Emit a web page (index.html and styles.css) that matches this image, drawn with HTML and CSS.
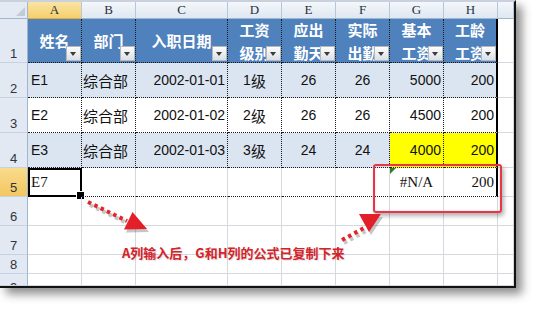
FILE: index.html
```html
<!DOCTYPE html>
<html lang="zh">
<head>
<meta charset="utf-8">
<title>Sheet</title>
<link rel="stylesheet" href="styles.css">
</head>
<body>
<div class="window">
  <div class="sheet">
    <div class="corner"><span class="tri"></span></div>
    <div class="ch sel">A</div><div class="ch">B</div><div class="ch">C</div><div class="ch">D</div><div class="ch">E</div><div class="ch">F</div><div class="ch">G</div><div class="ch">H</div><div class="ch"></div>

    <div class="rh">1</div>
    <div class="th">姓名<span class="flt"></span></div>
    <div class="th">部门<span class="flt"></span></div>
    <div class="th">入职日期<span class="flt"></span></div>
    <div class="th two">工资<br>级别<span class="flt"></span></div>
    <div class="th two">应出<br>勤天<span class="flt"></span></div>
    <div class="th two">实际<br>出勤<span class="flt"></span></div>
    <div class="th two">基本<br>工资<span class="flt"></span></div>
    <div class="th two hr">工龄<br>工资<span class="flt"></span></div>
    <div class="c"></div>

    <div class="rh">2</div>
    <div class="c t band">E1</div><div class="c t band cjk">综合部</div><div class="c t band num">2002-01-01</div><div class="c t band ctr">1<span class="cjk">级</span></div><div class="c t band ctr">26</div><div class="c t band ctr">26</div><div class="c t band num">5000</div><div class="c t band num hr">200</div><div class="c"></div>

    <div class="rh">3</div>
    <div class="c t">E2</div><div class="c t cjk">综合部</div><div class="c t num">2002-01-02</div><div class="c t ctr">2<span class="cjk">级</span></div><div class="c t ctr">26</div><div class="c t ctr">26</div><div class="c t num">4500</div><div class="c t num hr">200</div><div class="c"></div>

    <div class="rh">4</div>
    <div class="c t band">E3</div><div class="c t band cjk">综合部</div><div class="c t band num">2002-01-03</div><div class="c t band ctr">3<span class="cjk">级</span></div><div class="c t band ctr">24</div><div class="c t band ctr">24</div><div class="c t yel num">4000</div><div class="c t yel num hr">200</div><div class="c"></div>

    <div class="rh sel">5</div>
    <div class="c active ser">E7</div><div class="c db"></div><div class="c db"></div><div class="c db"></div><div class="c db"></div><div class="c db"></div><div class="c db ser ctr err">#N/A</div><div class="c db ser num hr">200</div><div class="c"></div>

    <div class="rh">6</div><div class="c"></div><div class="c"></div><div class="c"></div><div class="c"></div><div class="c"></div><div class="c"></div><div class="c"></div><div class="c"></div><div class="c"></div>
    <div class="rh">7</div><div class="c"></div><div class="c"></div><div class="c"></div><div class="c"></div><div class="c"></div><div class="c"></div><div class="c"></div><div class="c"></div><div class="c"></div>
    <div class="rh">8</div><div class="c"></div><div class="c"></div><div class="c"></div><div class="c"></div><div class="c"></div><div class="c"></div><div class="c"></div><div class="c"></div><div class="c"></div>
    <div class="rh clip">9</div><div class="c"></div><div class="c"></div><div class="c"></div><div class="c"></div><div class="c"></div><div class="c"></div><div class="c"></div><div class="c"></div><div class="c"></div>
  </div>

  <div class="redbox"></div>
  <svg class="arrows" width="537" height="309" viewBox="0 0 537 309">
    <g opacity="0.3" transform="translate(2,3)">
      <line x1="88" y1="202" x2="127" y2="221" stroke="#444" stroke-width="4" stroke-dasharray="3.5 3.5"/>
      <polygon points="147,229 132.5,212 124,229.5" fill="#444"/>
      <line x1="342" y1="240" x2="364" y2="228" stroke="#444" stroke-width="4" stroke-dasharray="3.5 3.5"/>
      <polygon points="381,214 359,214 369,232" fill="#444"/>
    </g>
    <line x1="88" y1="202" x2="127" y2="221" stroke="#e3242b" stroke-width="4" stroke-dasharray="3.5 3.5"/>
    <polygon points="147,229 132.5,212 124,229.5" fill="#e3202a"/>
    <line x1="342" y1="240" x2="364" y2="228" stroke="#e3242b" stroke-width="4" stroke-dasharray="3.5 3.5"/>
    <polygon points="381,214 359,214 369,232" fill="#e3202a"/>
  </svg>
  <div class="note">A列输入后，G和H列的公式已复制下来</div>
</div>
</body>
</html>
```

FILE: styles.css
```css
* { box-sizing: border-box; margin: 0; padding: 0; }
body { background: #fff; width: 537px; height: 309px; overflow: hidden; }

.window {
  position: relative;
  width: 516px;
  border-top: 2px solid #c9d1dc;
  border-right: 2px solid #111;
  border-bottom: 2px solid #111;
  background: #fff;
  box-shadow: 6px 6px 9px rgba(0, 0, 0, 0.45);
}

.sheet {
  display: grid;
  grid-template-columns: 28px 54px 54px 92px 54px 54px 54px 54px 54px 16px;
  grid-template-rows: 17px 44px 35px 35px 35px 29px 29px 29px 19px 12px;
  font-family: "Liberation Sans", Arial, sans-serif;
  font-size: 14px;
  color: #111;
}

.sheet > div {
  position: relative;
  display: flex;
  align-items: center;
  padding: 0 3px;
  white-space: nowrap;
  border-right: 1px solid #d5d8dd;
  border-bottom: 1px solid #d5d8dd;
}

.sheet > .corner { background: #e3eaf3; border-right-color: #9eb6ce; border-bottom-color: #9eb6ce; }
.tri {
  position: absolute; right: 2px; bottom: 2px;
  width: 0; height: 0;
  border-left: 9px solid transparent;
  border-bottom: 9px solid #c3ccd6;
}

.sheet > .ch {
  justify-content: center;
  background: linear-gradient(#f4f7fb, #dfe7f1);
  border-right-color: #b7c7da;
  border-bottom-color: #9eb6ce;
  font-family: "Liberation Serif", "DejaVu Serif", serif;
  font-size: 13px;
  color: #27303d;
}
.sheet > .ch.sel { background: linear-gradient(#fae4a4, #f5cf6b); border-bottom-color: #f0a73a; }

.sheet > .rh {
  justify-content: center;
  align-items: flex-end;
  padding-bottom: 1px;
  background: #e2e9f3;
  border-right-color: #9eb6ce;
  border-bottom-color: #c5d3e3;
  font-family: "Liberation Sans", Arial, sans-serif;
  font-size: 13px;
  line-height: 14px;
  color: #2e3440;
}
.sheet > .rh.sel { background: linear-gradient(#f9dc8c, #f3c660); }
.sheet > .rh.clip { align-items: flex-start; padding-top: 7px; overflow: hidden; }

.sheet > .th {
  justify-content: center;
  background: #4f81bd;
  color: #fff;
  font-family: "Noto Sans CJK SC", sans-serif;
  font-weight: bold;
  font-size: 15px;
  line-height: 23px;
  text-align: center;
  border-right: 1px dotted #1a1a1a;
  border-bottom: 1px dotted #1a1a1a;
}
.flt {
  position: absolute; right: 0; bottom: 1px;
  width: 15px; height: 15px;
  background: linear-gradient(#fdfdfd, #dcdfe3);
  border: 1px solid #b3b8bf;
}
.flt::after {
  content: ""; position: absolute; left: 3px; top: 5px;
  border-left: 3.5px solid transparent;
  border-right: 3.5px solid transparent;
  border-top: 4px solid #3a3a3a;
}

.sheet > .t { border-right: 1px dotted #1a1a1a; border-bottom: 1px dotted #1a1a1a; }
.sheet > .band { background: #dbe5f1; }
.sheet > .yel { background: #ffff00; }
.sheet > .num { justify-content: flex-end; padding-right: 2px; }
.sheet > .ctr { justify-content: center; }
.cjk { font-family: "Noto Sans CJK SC", sans-serif; font-size: 15px; }
.sheet > .cjk { padding-left: 1px; }
.ser { font-family: "Liberation Serif", "DejaVu Serif", serif; font-size: 15px; }
.sheet > .hr { border-right: 2px solid #000; }
.sheet > .db { border-bottom: 1px dotted #1a1a1a; }

.sheet > .active { border: 2px solid #000; padding-left: 1px; }
.active::after {
  content: ""; position: absolute; right: -5px; bottom: -5px;
  width: 7px; height: 7px; background: #000; border: 1px solid #fff;
}
.err::before {
  content: ""; position: absolute; left: 0; top: 0;
  border-top: 6px solid #2e7d32;
  border-right: 6px solid transparent;
}

.redbox {
  position: absolute; left: 373px; top: 162px;
  width: 129px; height: 49px;
  border: 2px solid #e4374a;
  border-radius: 3px;
  box-shadow: 2px 3px 4px rgba(0, 0, 0, 0.3), inset 0 0 2px rgba(255, 150, 160, 0.6);
}
.arrows { position: absolute; left: 0; top: -2px; pointer-events: none; }
.note {
  position: absolute; left: 122px; top: 242px;
  font-family: "Noto Sans CJK SC", sans-serif;
  font-weight: bold; font-size: 13px; line-height: 18px;
  color: #d4232a;
  white-space: nowrap;
  text-shadow: 1px 1px 1px rgba(0, 0, 0, 0.12);
}
```
